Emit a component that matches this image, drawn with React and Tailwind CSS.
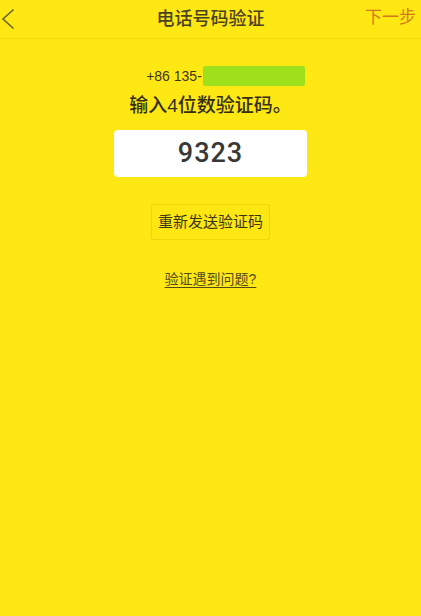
import React from "react";

const FONT = { fontFamily: '"Liberation Sans", "Noto Sans CJK SC", sans-serif' };

const App = () => {
  return (
    <div className="w-[421px] h-[616px] bg-[#fde814] text-[#3d3517]" style={FONT}>
      <div className="relative h-[39px] flex items-center justify-center border-b border-[#f1da0a]">
        <button className="absolute left-[1px] top-[7px] w-[16px] h-[24px] flex items-center">
          <svg width="14" height="22" viewBox="0 0 14 22" fill="none">
            <path d="M12.5 1.5L2 11l10.5 9.5" stroke="#6b5f1c" strokeWidth="1.6" />
          </svg>
        </button>
        <h1 className="text-[18px] font-medium text-[#4a4120] leading-none">电话号码验证</h1>
        <span className="absolute right-[5px] top-[7px] text-[17px] text-[#d37a1a] leading-[22px]">下一步</span>
      </div>

      <div className="flex flex-col items-center">
        <div className="mt-[27px] flex items-center h-[20px] pl-[30px]">
          <span className="text-[14px] text-[#3d3517]">+86 135-</span>
          <span className="ml-[1px] w-[102px] h-[20px] bg-[#9fe01c] rounded-[2px] blur-[0.5px]"></span>
        </div>
        <p className="mt-[8px] text-[19px] font-medium leading-[24px] text-[#372f14]">输入4位数验证码。</p>
        <div className="mt-[12px] w-[193px] h-[47px] bg-white rounded-[4px] flex items-center justify-center">
          <span className="text-[27px] font-medium text-[#383838] tracking-[1px]" style={{ fontFamily: "Roboto, sans-serif" }}>9323</span>
        </div>
        <button className="mt-[27px] w-[119px] h-[36px] rounded-[3px] border border-[#efd60a] bg-[#fde712] text-[15px] text-[#3d3517] shadow-[0_0_1px_rgba(0,0,0,0.08)]">
          重新发送验证码
        </button>
        <a className="mt-[29px] text-[14px] text-[#55491c] underline underline-offset-[3px]">验证遇到问题?</a>
      </div>
    </div>
  );
};

export default App;
